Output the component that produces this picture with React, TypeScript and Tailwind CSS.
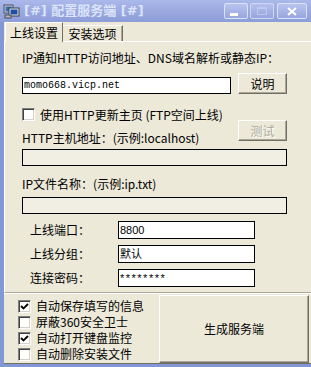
import React from 'react';

const font = { fontFamily: '"Noto Sans CJK SC", "Liberation Sans", sans-serif' };

function Check({ checked }: { checked: boolean }) {
  return (
    <div className="w-[13px] h-[13px] shrink-0 bg-white border border-t-[#808080] border-l-[#808080] border-r-white border-b-white shadow-[inset_1px_1px_0_#404040,inset_-1px_-1px_0_#d4d0c8] flex items-center justify-center">
      {checked && (
        <svg width="9" height="9" viewBox="0 0 9 9">
          <path d="M1 4 L3.5 6.5 L8 2" stroke="#000" strokeWidth="1.8" fill="none" />
        </svg>
      )}
    </div>
  );
}

function Btn({ label, disabled }: { label: string; disabled?: boolean }) {
  return (
    <div className="w-[49px] h-[21px] shrink-0 bg-[#ece9d8] border border-t-white border-l-white border-r-[#716f64] border-b-[#716f64] shadow-[inset_-1px_-1px_0_#aca899] flex items-center justify-center">
      <span
        className={
          disabled
            ? 'text-[12px] leading-[12px] text-[#aca899] [text-shadow:1px_1px_0_#fff]'
            : 'text-[12px] leading-[12px] text-black'
        }
      >
        {label}
      </span>
    </div>
  );
}

function Field({ label, value, stars }: { label: string; value: string; stars?: boolean }) {
  return (
    <div className="flex items-center h-[18px]">
      <span className="w-[96px] pl-[8px] text-[12px] leading-[12px]">{label}</span>
      <div className="w-[137px] h-[18px] bg-white border border-black flex items-center px-[1px]">
        <span
          className={stars ? 'text-[11px] leading-[12px] tracking-[1.5px]' : 'text-[11px] leading-[12px]'}
          style={{ fontFamily: '"Liberation Sans", "Noto Sans CJK SC", sans-serif' }}
        >
          {value}
        </span>
      </div>
    </div>
  );
}

function TitleButton({ children, faded }: { children: React.ReactNode; faded?: boolean }) {
  return (
    <div
      className={
        'h-[16px] rounded-[2px] border border-[#dbe2f7] bg-gradient-to-b from-[#b9c4ef] to-[#98a6df] flex items-center justify-center ' +
        (faded ? 'opacity-80' : '')
      }
    >
      {children}
    </div>
  );
}

export default function App() {
  return (
    <div className="w-[311px] h-[367px] overflow-hidden bg-[#ece9d8] flex flex-col text-black" style={font}>
      {/* title bar */}
      <div className="h-[22px] shrink-0 flex items-center bg-gradient-to-b from-[#aab8ea] via-[#9ba9e0] to-[#8d9dd8] pl-[3px] pr-[4px]">
        <svg width="17" height="16" viewBox="0 0 17 16">
          <rect x="1" y="2" width="9" height="8" fill="#c8ccd4" stroke="#4a5060" />
          <rect x="2.5" y="3.5" width="6" height="5" fill="#3b6fb8" />
          <rect x="6" y="5" width="10" height="8" fill="#e4e6ea" stroke="#3a4050" />
          <rect x="7.5" y="6.5" width="7" height="5" fill="#1f4fa3" />
          <rect x="2" y="12" width="6" height="3" fill="#b0b4bc" stroke="#4a5060" />
        </svg>
        <span
          className="ml-[4px] text-[13px] leading-[14px] font-bold text-[#dbe3f9]"
          style={{ fontFamily: '"DejaVu Sans", "Noto Sans CJK SC", sans-serif' }}
        >
          [#] 配置服务端 [#]
        </span>
        <div className="ml-auto flex items-center gap-[2px]">
          <div className="w-[24px]">
            <TitleButton>
              <div className="w-[8px] h-[3px] bg-white mt-[6px] -ml-[4px]" />
            </TitleButton>
          </div>
          <div className="w-[24px]">
            <TitleButton faded>
              <div className="w-[10px] h-[8px] border border-[#c9d1f1] border-t-2" />
            </TitleButton>
          </div>
          <div className="w-[30px] ml-[1px]">
            <TitleButton>
              <svg width="10" height="9" viewBox="0 0 10 9">
                <path d="M1 1 L9 8 M9 1 L1 8" stroke="#fff" strokeWidth="2" />
              </svg>
            </TitleButton>
          </div>
        </div>
      </div>

      {/* window body */}
      <div className="flex-1 flex flex-col border-l-4 border-[#8397d6]">
        {/* tabs */}
        <div className="h-[19px] shrink-0 flex items-end pl-[1px]">
          <div className="relative z-10 w-[58px] h-[20px] -mb-px bg-[#ece9d8] border-t border-l border-t-white border-l-white border-r border-r-[#716f64] flex items-center justify-center">
            <span className="text-[12px] leading-[12px]">上线设置</span>
          </div>
          <div className="w-[60px] h-[16px] border-t border-t-white border-r border-r-[#716f64] shadow-[inset_-1px_0_0_#aca899] flex items-center justify-center">
            <span className="text-[12px] leading-[12px]">安装选项</span>
          </div>
        </div>

        {/* panel */}
        <div className="h-[252px] shrink-0 border-t border-l border-t-white border-l-white border-b border-b-[#aca899] pl-[17px] pt-[10px]">
          <div className="text-[12px] leading-[12px]">IP通知HTTP访问地址、DNS域名解析或静态IP：</div>

          <div className="flex items-end mt-[9px]">
            <div className="w-[209px] h-[17px] bg-white border border-black flex items-center px-[1px]">
              <span className="text-[10px] leading-[12px]" style={{ fontFamily: '"Liberation Mono", monospace' }}>
                momo668.vicp.net
              </span>
            </div>
            <div className="ml-[7px]">
              <Btn label="说明" />
            </div>
          </div>

          <div className="flex">
            <div className="w-[216px] flex flex-col">
              <div className="flex items-center mt-[14px] h-[13px]">
                <Check checked={false} />
                <span className="ml-[5px] text-[12px] leading-[12px]">使用HTTP更新主页 (FTP空间上线)</span>
              </div>
              <div className="mt-[11px] text-[12px] leading-[12px]">HTTP主机地址：(示例:localhost)</div>
            </div>
            <div className="mt-[26px]">
              <Btn label="测试" disabled />
            </div>
          </div>

          <div className="mt-[5px] w-[265px] h-[17px] bg-[#f1efe3] border border-black" />

          <div className="mt-[12px] text-[12px] leading-[12px]">IP文件名称：(示例:ip.txt)</div>

          <div className="mt-[7px] w-[265px] h-[17px] bg-[#f1efe3] border border-black" />

          <div className="mt-[7px] flex flex-col gap-[6px]">
            <Field label="上线端口：" value="8800" />
            <Field label="上线分组：" value="默认" />
            <Field label="连接密码：" value="********" stars />
          </div>
        </div>

        {/* bottom area */}
        <div className="flex-1 flex border-t border-t-white">
          <div className="w-[155px] shrink-0 flex flex-col pl-[14px] pt-[4px]">
            {[
              ['自动保存填写的信息', true],
              ['屏蔽360安全卫士', false],
              ['自动打开键盘监控', true],
              ['自动删除安装文件', false],
            ].map(([label, checked]) => (
              <div key={label as string} className="h-[16px] flex items-center">
                <Check checked={checked as boolean} />
                <span className="ml-[5px] text-[12px] leading-[12px]">{label as string}</span>
              </div>
            ))}
          </div>
          <div className="w-[150px] mt-px bg-[#ece9d8] border border-t-white border-l-white border-r-[#716f64] border-b-[#716f64] shadow-[inset_-1px_-1px_0_#aca899] flex items-center justify-center">
            <span className="text-[12px] leading-[12px]">生成服务端</span>
          </div>
        </div>
        <div className="h-px shrink-0 bg-[#716f64]" />
      </div>
      <div className="h-[3px] shrink-0 bg-[#8397d6]" />
    </div>
  );
}
